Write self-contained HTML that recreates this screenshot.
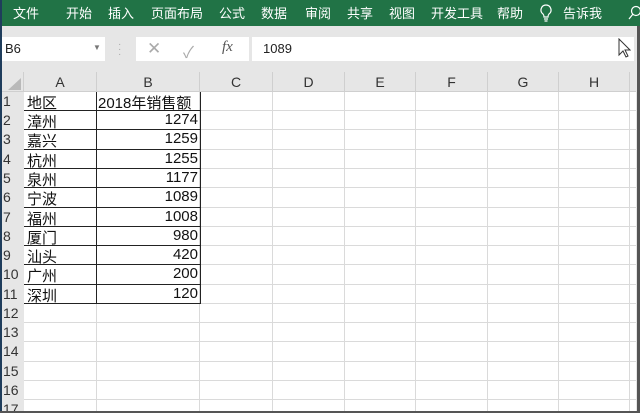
<!DOCTYPE html><html><head><meta charset="utf-8"><style>
*{margin:0;padding:0;box-sizing:border-box}
html,body{width:640px;height:413px;overflow:hidden}
body{background:#e6e6e6;position:relative;font-family:"Liberation Sans","Noto Sans CJK SC",sans-serif}
.a{position:absolute;white-space:nowrap}
.rib{left:0;top:0;width:640px;height:26px;background:#217346}
.t{color:#fff;font-size:13px;top:3px}
.hl{position:absolute;height:1px;background:#dadada;left:24px;width:612px}
.vl{position:absolute;width:1px;background:#dadada;top:92px;height:319px}
.ch{position:absolute;top:72px;height:20px;font-size:14px;color:#333;text-align:center;line-height:21px;border-right:1px solid #cfcfcf}
.rn{position:absolute;left:2px;width:22px;font-size:14px;color:#333;padding-left:1px}
.c{position:absolute;font-size:15px;color:#111}
</style></head><body>
<div class="a rib"></div>
<div class="a" style="left:0;top:0;width:2px;height:413px;background:#1f3d5c"></div>
<div class="a t" style="left:13px">文件</div>
<div class="a t" style="left:66px">开始</div>
<div class="a t" style="left:108px">插入</div>
<div class="a t" style="left:151px">页面布局</div>
<div class="a t" style="left:219px">公式</div>
<div class="a t" style="left:261px">数据</div>
<div class="a t" style="left:305px">审阅</div>
<div class="a t" style="left:347px">共享</div>
<div class="a t" style="left:389px">视图</div>
<div class="a t" style="left:431px">开发工具</div>
<div class="a t" style="left:497px">帮助</div>
<svg class="a" style="left:540px;top:4px" width="12" height="18" viewBox="0 0 12 18"><path d="M6 1a5 5 0 0 0-3 9c1 1 1 2 1 3h4c0-1 0-2 1-3a5 5 0 0 0-3-9zM4 15h4M4.5 17h3" fill="none" stroke="#fff" stroke-width="1.2"/></svg>
<div class="a t" style="left:563px">告诉我</div>
<svg class="a" style="left:628px;top:5px" width="12" height="16"><circle cx="8" cy="6" r="4.5" fill="none" stroke="#fff" stroke-width="1.2"/><path d="M5 9L1 14" stroke="#fff" stroke-width="1.2"/></svg>
<div class="a" style="left:2px;top:37px;width:103px;height:24px;background:#fff;font-size:13px;line-height:24px;padding-left:3px;color:#222">B6<span style="position:absolute;left:91px;top:-1px;font-size:8px;color:#777">▼</span></div>
<div class="a" style="left:118px;top:42px;color:#aaa;font-size:10px;line-height:5px">·<br>·<br>·</div>
<div class="a" style="left:136px;top:37px;width:113px;height:24px;background:#fff"></div>
<div class="a" style="left:147px;top:39px;font-size:17px;color:#aaa">✕</div>
<div class="a" style="left:183px;top:39px;font-size:16px;color:#aaa">✓</div>
<div class="a" style="left:222px;top:39px;font-size:15px;color:#555;font-family:'Liberation Serif',serif;font-style:italic">fx</div>
<div class="a" style="left:252px;top:37px;width:382px;height:24px;background:#fff;font-size:13px;line-height:24px;padding-left:11px;color:#222">1089</div>
<svg class="a" style="left:617px;top:38px" width="14" height="22"><path d="M2 1v16l4-4 3 6 2-1-3-6h5z" fill="#fff" stroke="#333" stroke-width="1"/></svg>
<div class="a" style="left:2px;top:92px;width:22px;height:321px;background:#e6e6e6"></div>
<div class="a" style="left:24px;top:92px;width:612px;height:321px;background:#fff"></div>
<div class="a" style="left:2px;top:72px;width:22px;height:20px;border-right:1px solid #cfcfcf;border-bottom:1px solid #cfcfcf"></div>
<svg class="a" style="left:8px;top:78px" width="14" height="12"><path d="M13 0V12H0z" fill="#b9b9b9"/></svg>
<div class="ch" style="left:24px;width:73px">A</div>
<div class="ch" style="left:97px;width:103px">B</div>
<div class="ch" style="left:200px;width:73px">C</div>
<div class="ch" style="left:273px;width:72px">D</div>
<div class="ch" style="left:345px;width:71px">E</div>
<div class="ch" style="left:416px;width:72px">F</div>
<div class="ch" style="left:488px;width:71px">G</div>
<div class="ch" style="left:559px;width:71px">H</div>
<div class="a" style="left:2px;top:91px;width:634px;height:1px;background:#cfcfcf"></div>
<div class="vl" style="left:96px"></div><div class="vl" style="left:199px"></div><div class="vl" style="left:272px"></div><div class="vl" style="left:344px"></div><div class="vl" style="left:415px"></div><div class="vl" style="left:487px"></div><div class="vl" style="left:558px"></div><div class="vl" style="left:629px"></div>
<div class="hl" style="top:110px"></div><div class="hl" style="top:129px"></div><div class="hl" style="top:149px"></div><div class="hl" style="top:168px"></div><div class="hl" style="top:187px"></div><div class="hl" style="top:207px"></div><div class="hl" style="top:226px"></div><div class="hl" style="top:245px"></div><div class="hl" style="top:264px"></div><div class="hl" style="top:284px"></div><div class="hl" style="top:303px"></div><div class="hl" style="top:322px"></div><div class="hl" style="top:341px"></div><div class="hl" style="top:361px"></div><div class="hl" style="top:380px"></div><div class="hl" style="top:399px"></div>
<div class="a" style="left:24px;top:92px;width:177px;height:212px;border:1px solid #222;border-top:none;border-left:none"></div>
<div class="a" style="left:96px;top:92px;width:1px;height:212px;background:#222"></div>
<div class="a" style="left:24px;top:110px;width:177px;height:1px;background:#222"></div><div class="a" style="left:24px;top:129px;width:177px;height:1px;background:#222"></div><div class="a" style="left:24px;top:149px;width:177px;height:1px;background:#222"></div><div class="a" style="left:24px;top:168px;width:177px;height:1px;background:#222"></div><div class="a" style="left:24px;top:187px;width:177px;height:1px;background:#222"></div><div class="a" style="left:24px;top:207px;width:177px;height:1px;background:#222"></div><div class="a" style="left:24px;top:226px;width:177px;height:1px;background:#222"></div><div class="a" style="left:24px;top:245px;width:177px;height:1px;background:#222"></div><div class="a" style="left:24px;top:264px;width:177px;height:1px;background:#222"></div><div class="a" style="left:24px;top:284px;width:177px;height:1px;background:#222"></div>
<div class="rn" style="top:93px">1</div><div class="rn" style="top:112px">2</div><div class="rn" style="top:131px">3</div><div class="rn" style="top:151px">4</div><div class="rn" style="top:170px">5</div><div class="rn" style="top:189px">6</div><div class="rn" style="top:209px">7</div><div class="rn" style="top:228px">8</div><div class="rn" style="top:247px">9</div><div class="rn" style="top:266px">10</div><div class="rn" style="top:286px">11</div><div class="rn" style="top:305px">12</div><div class="rn" style="top:324px">13</div><div class="rn" style="top:343px">14</div><div class="rn" style="top:363px">15</div><div class="rn" style="top:382px">16</div><div class="rn" style="top:401px">17</div>
<div class="c" style="left:27px;top:92px">地区</div><div class="c" style="left:98px;top:92px">2018年销售额</div>
<div class="c" style="left:27px;top:111px">漳州</div><div class="c" style="right:442px;top:111px">1274</div>
<div class="c" style="left:27px;top:130px">嘉兴</div><div class="c" style="right:442px;top:130px">1259</div>
<div class="c" style="left:27px;top:150px">杭州</div><div class="c" style="right:442px;top:150px">1255</div>
<div class="c" style="left:27px;top:169px">泉州</div><div class="c" style="right:442px;top:169px">1177</div>
<div class="c" style="left:27px;top:188px">宁波</div><div class="c" style="right:442px;top:188px">1089</div>
<div class="c" style="left:27px;top:208px">福州</div><div class="c" style="right:442px;top:208px">1008</div>
<div class="c" style="left:27px;top:227px">厦门</div><div class="c" style="right:442px;top:227px">980</div>
<div class="c" style="left:27px;top:246px">汕头</div><div class="c" style="right:442px;top:246px">420</div>
<div class="c" style="left:27px;top:265px">广州</div><div class="c" style="right:442px;top:265px">200</div>
<div class="c" style="left:27px;top:285px">深圳</div><div class="c" style="right:442px;top:285px">120</div>
<div class="a" style="left:0;top:411px;width:640px;height:2px;background:#555"></div>
<div class="a" style="left:637px;top:26px;width:3px;height:387px;background:#555"></div>
</body></html>
